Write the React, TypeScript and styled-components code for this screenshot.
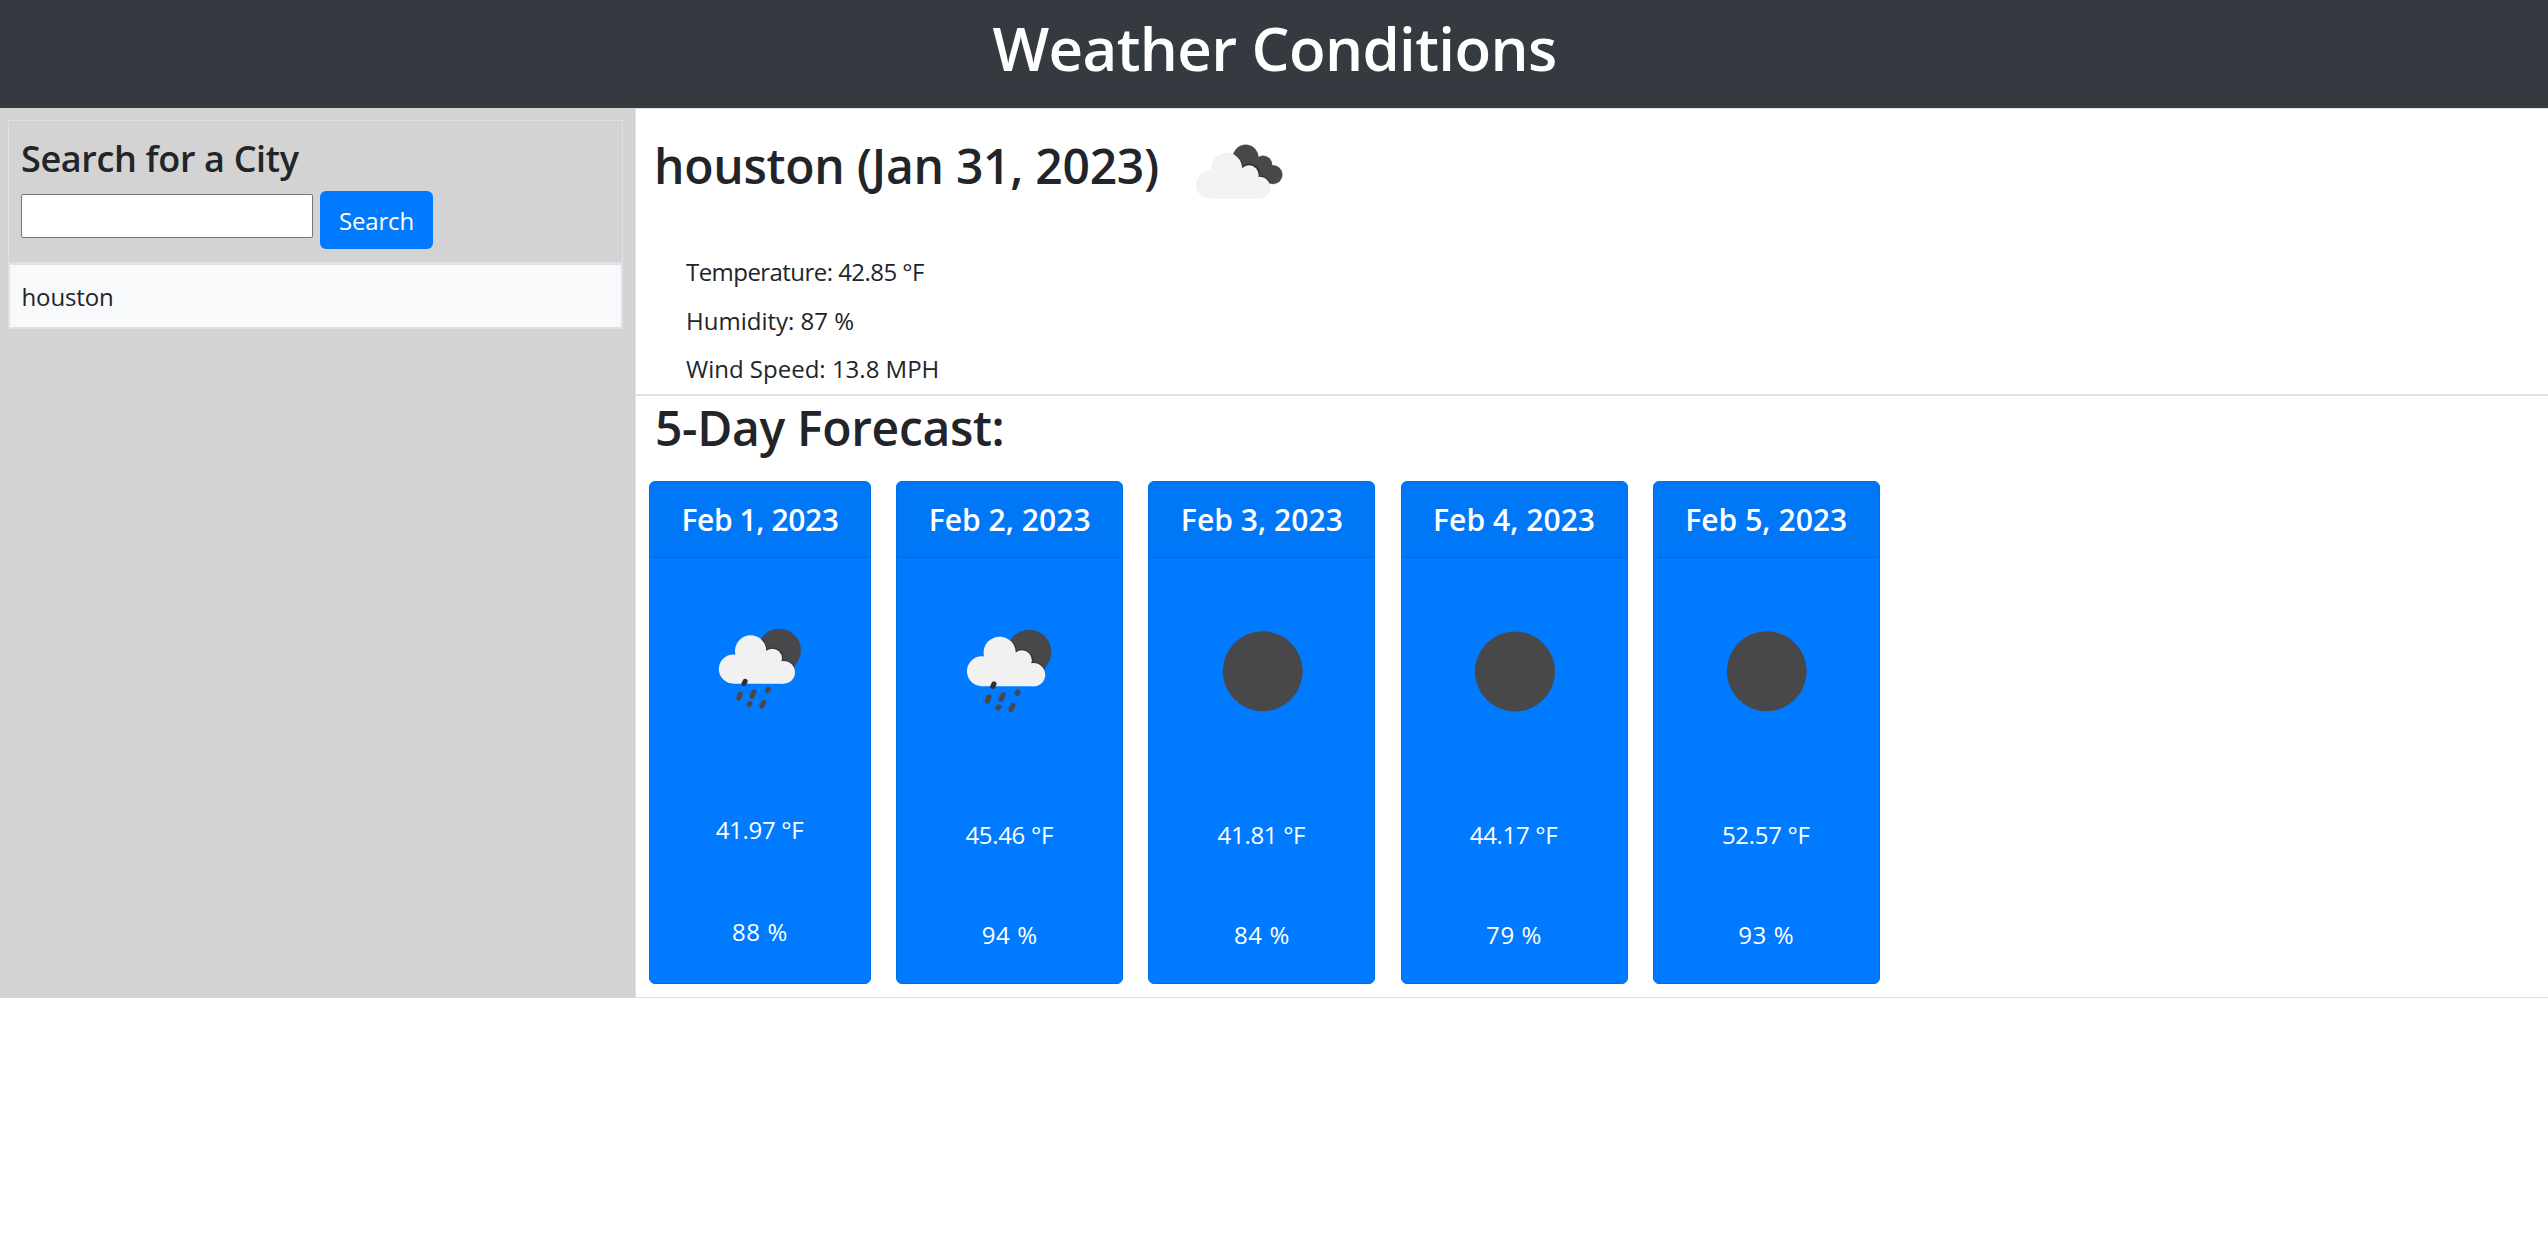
import React from "react";
import styled, { createGlobalStyle } from "styled-components";

const GlobalStyle = createGlobalStyle`
  *, *::before, *::after { box-sizing: border-box; }
  body {
    margin: 0;
    background: #fff;
    color: #212529;
    font: 400 24px/36px "Open Sans", "Noto Sans", sans-serif;
  }
  h1, h2, h3, h4, p, ul { margin: 0; padding: 0; }
`;

const Header = styled.header`
  height: 108px;
  padding: 12px 0 0 1px;
  background: #343a40;
  color: #fff;
  text-align: center;
`;

const PageTitle = styled.h1`
  font-size: 60px;
  font-weight: 600;
  line-height: 72px;
  letter-spacing: -0.62px;
`;

const Layout = styled.div`
  display: flex;
  height: 890px;
`;

const Sidebar = styled.aside`
  flex: 0 0 635px;
  padding: 12px 12px 0 8px;
  background: #d3d3d3;
`;

const SearchBox = styled.section`
  height: 142px;
  padding: 16px 12px 0;
  border: 1px solid #dee2e6;
  border-bottom: 0;
`;

const SearchTitle = styled.h3`
  margin-bottom: 11px;
  font-size: 36px;
  font-weight: 600;
  line-height: 43px;
  letter-spacing: -0.35px;
`;

const SearchRow = styled.div`
  display: flex;
  align-items: flex-start;
`;

const CityInput = styled.input`
  width: 292px;
  height: 44px;
  margin: 3px 7px 0 0;
  padding: 0 4px;
  border: 1px solid #767676;
  border-radius: 2px;
  background: #fff;
  font: inherit;
  outline: 0;
`;

const SearchButton = styled.button`
  width: 113px;
  height: 58px;
  padding: 1px 0 0;
  border: 0;
  border-radius: 6px;
  background: #007bff;
  color: #fff;
  font: inherit;
  letter-spacing: -0.16px;
`;

const History = styled.ul`
  list-style: none;
`;

const HistoryItem = styled.li`
  height: 67px;
  padding: 14px 11.5px 0;
  border: 2px solid #dee2e6;
  border-top-width: 3px;
  background: #f8f9fa;
  letter-spacing: -0.13px;
`;

const Main = styled.main`
  flex: 1;
  display: flex;
  flex-direction: column;
  border: 1px solid #dee2e6;
  border-right: 0;
`;

const Current = styled.section`
  height: 287px;
  padding: 28px 18px 0;
  border-bottom: 2px solid #dee2e6;
`;

const CurrentTop = styled.div`
  display: flex;
  align-items: flex-start;
  height: 58px;

  svg { flex: none; margin: 6px 0 0 35px; }
`;

const SectionTitle = styled.h2<{ $tracking: number }>`
  font-size: 48px;
  font-weight: 600;
  line-height: 58px;
  letter-spacing: ${(p) => p.$tracking}px;
  white-space: nowrap;
`;

const Stats = styled.div`
  display: flex;
  flex-direction: column;
  gap: 12.6px;
  padding: 59px 0 0 32px;
`;

const Stat = styled.p<{ $tracking: number }>`
  letter-spacing: ${(p) => p.$tracking}px;
`;

const Forecast = styled.section`
  padding: 3px 13px 0;

  h2 { padding-left: 6px; }
`;

const Cards = styled.div`
  display: flex;
  gap: 25.2px;
  margin-top: 24px;
`;

const Card = styled.article<{ $width: number }>`
  flex: 0 0 ${(p) => p.$width}px;
  height: 503px;
  overflow: hidden;
  border: 1px solid #006fe6;
  border-radius: 6px;
  background: #007bff;
  color: #fff;
  text-align: center;
`;

const CardHeader = styled.div`
  height: 76px;
  padding-top: 20px;
  border-bottom: 1px solid #006adc;
  background: #0077f7;
`;

const CardDate = styled.h4<{ $tracking: number }>`
  font-size: 30px;
  font-weight: 600;
  letter-spacing: ${(p) => p.$tracking}px;
`;

const CardBody = styled.div`
  display: flex;
  flex-direction: column;
  align-items: center;
  padding-top: 30px;

  svg { flex: none; display: block; }
`;

const Temp = styled.p`
  margin-top: 62px;
  padding-right: 1px;
  letter-spacing: -0.31px;
`;

const Humid = styled.p<{ $gap: number }>`
  margin-top: ${(p) => p.$gap}px;
  letter-spacing: 0.6px;
`;

function CloudsIcon() {
  return (
    <svg width="90" height="57" viewBox="40 40 270 171">
      <g fill="#48484a" stroke="#38393b" strokeWidth="1">
        <circle cx="195" cy="83" r="38" />
        <circle cx="247" cy="105" r="27" />
        <circle cx="277" cy="135" r="28" />
      </g>
      <path fill="#48484a" d="M185 82L252 82L290 132L268 162L225 150L180 112Z" />
      <g stroke="#303133" strokeWidth="5" fill="none">
        <path d="M163 76A46 46 0 0 1 184 108" />
        <path d="M188 110A29 29 0 0 1 234 138" />
        <path d="M236 141A33 33 0 0 1 266 160" />
      </g>
      <g fill="#f2f2f0">
        <circle cx="88" cy="165" r="42" />
        <circle cx="138" cy="115" r="46" />
        <circle cx="205" cy="136" r="29" />
        <circle cx="236" cy="174" r="33" />
        <path d="M88 150L120 110L205 120L236 160V207H88Z" />
      </g>
    </svg>
  );
}

function RainIcon({ size }: { size: number }) {
  return (
    <svg width={size} height={size} viewBox="-63 -66 486 486">
      <circle cx="238" cy="121" r="65" fill="#48484a" />
      <g fill="none" stroke="#2d2f32" strokeWidth="5">
        <path d="M187 90A47 47 0 0 1 199 120" />
        <path d="M202 120A29 29 0 0 1 246 150" />
        <path d="M248 153A34 34 0 0 1 283 173" />
      </g>
      <g fill="#f1f1f2">
        <circle cx="100" cy="177" r="43.5" />
        <circle cx="152" cy="123" r="47" />
        <circle cx="217" cy="145" r="29" />
        <circle cx="251" cy="187" r="34" />
        <path d="M100 150L130 110L215 130L251 170V221H100Z" />
      </g>
      <g stroke="#48484a" strokeWidth="15" strokeLinecap="round">
        <path d="M135.500 214L132 221" stroke="#2e2f31" />
        <path d="M121 252L116 264" />
        <path d="M162 246L156 259" />
        <path d="M205 238L203 242" />
        <path d="M149.500 281L147.500 284" />
        <path d="M191 277L185 289" />
      </g>
    </svg>
  );
}

function NightIcon({ size }: { size: number }) {
  return (
    <svg width={size} height={size} viewBox="0 0 100 100">
      <circle cx="50.3" cy="50" r="24" fill="#48484a" />
    </svg>
  );
}

const days = [
  { date: "Feb 1, 2023", temp: "41.97 °F", humidity: "88 %", rain: true, width: 222, icon: 162, gap: 66, tracking: -0.4 },
  { date: "Feb 2, 2023", temp: "45.46 °F", humidity: "94 %", rain: true, width: 227, icon: 166.5, gap: 64, tracking: 0.05 },
  { date: "Feb 3, 2023", temp: "41.81 °F", humidity: "84 %", rain: false, width: 227, icon: 166.5, gap: 64, tracking: 0.05 },
  { date: "Feb 4, 2023", temp: "44.17 °F", humidity: "79 %", rain: false, width: 227, icon: 167, gap: 64, tracking: 0.05 },
  { date: "Feb 5, 2023", temp: "52.57 °F", humidity: "93 %", rain: false, width: 227, icon: 166.5, gap: 64, tracking: 0.05 },
];

export default function App() {
  return (
    <>
      <GlobalStyle />
      <Header>
        <PageTitle>Weather Conditions</PageTitle>
      </Header>
      <Layout>
        <Sidebar>
          <SearchBox>
            <SearchTitle>Search for a City</SearchTitle>
            <SearchRow>
              <CityInput type="text" aria-label="City" />
              <SearchButton type="button">Search</SearchButton>
            </SearchRow>
          </SearchBox>
          <History>
            <HistoryItem>houston</HistoryItem>
          </History>
        </Sidebar>
        <Main>
          <Current>
            <CurrentTop>
              <SectionTitle $tracking={-0.26}>houston (Jan 31, 2023)</SectionTitle>
              <CloudsIcon />
            </CurrentTop>
            <Stats>
              <Stat $tracking={-0.55}>Temperature: 42.85 °F</Stat>
              <Stat $tracking={0}>Humidity: 87 %</Stat>
              <Stat $tracking={0}>Wind Speed: 13.8 MPH</Stat>
            </Stats>
          </Current>
          <Forecast>
            <SectionTitle $tracking={-0.34}>5-Day Forecast:</SectionTitle>
            <Cards>
              {days.map((d) => (
                <Card key={d.date} $width={d.width}>
                  <CardHeader>
                    <CardDate $tracking={d.tracking}>{d.date}</CardDate>
                  </CardHeader>
                  <CardBody>
                    {d.rain ? <RainIcon size={d.icon} /> : <NightIcon size={d.icon} />}
                    <Temp>{d.temp}</Temp>
                    <Humid $gap={d.gap}>{d.humidity}</Humid>
                  </CardBody>
                </Card>
              ))}
            </Cards>
          </Forecast>
        </Main>
      </Layout>
    </>
  );
}
